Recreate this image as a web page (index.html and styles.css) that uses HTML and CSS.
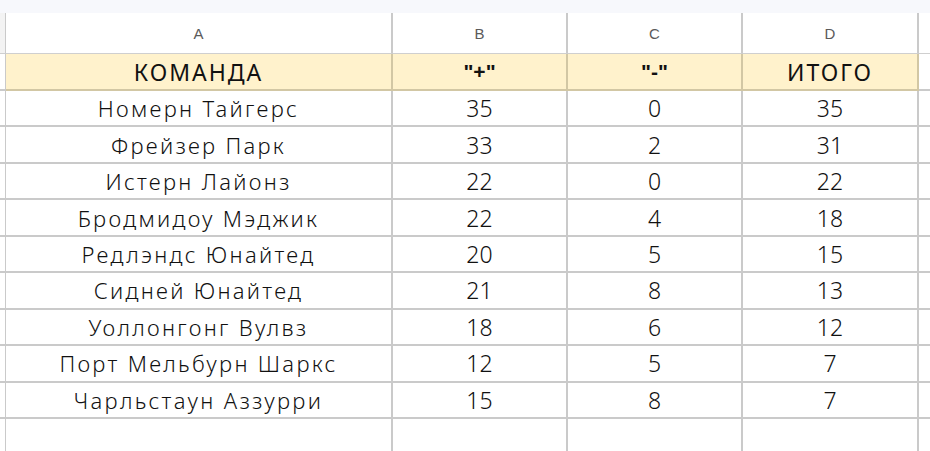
FILE: index.html
```html
<!DOCTYPE html>
<html lang="ru">
<head>
<meta charset="utf-8">
<title>Таблица</title>
<link rel="stylesheet" href="styles.css">
</head>
<body>
<div class="topbar"></div>
<div class="sheet">
  <div class="cell stub letters"></div>
  <div class="cell letter">A</div>
  <div class="cell letter">B</div>
  <div class="cell letter">C</div>
  <div class="cell letter">D</div>
  <div class="cell fill letters-fill"></div>

  <div class="cell stub headstub"></div>
  <div class="cell head name-head">КОМАНДА</div>
  <div class="cell head sign">"+"</div>
  <div class="cell head sign">"-"</div>
  <div class="cell head name-head">ИТОГО</div>
  <div class="cell fill headfill"></div>

  <div class="cell stub"></div><div class="cell name">Номерн Тайгерс</div><div class="cell num">35</div><div class="cell num">0</div><div class="cell num">35</div><div class="cell fill"></div>
  <div class="cell stub"></div><div class="cell name">Фрейзер Парк</div><div class="cell num">33</div><div class="cell num">2</div><div class="cell num">31</div><div class="cell fill"></div>
  <div class="cell stub"></div><div class="cell name">Истерн Лайонз</div><div class="cell num">22</div><div class="cell num">0</div><div class="cell num">22</div><div class="cell fill"></div>
  <div class="cell stub"></div><div class="cell name">Бродмидоу Мэджик</div><div class="cell num">22</div><div class="cell num">4</div><div class="cell num">18</div><div class="cell fill"></div>
  <div class="cell stub"></div><div class="cell name">Редлэндс Юнайтед</div><div class="cell num">20</div><div class="cell num">5</div><div class="cell num">15</div><div class="cell fill"></div>
  <div class="cell stub"></div><div class="cell name">Сидней Юнайтед</div><div class="cell num">21</div><div class="cell num">8</div><div class="cell num">13</div><div class="cell fill"></div>
  <div class="cell stub"></div><div class="cell name">Уоллонгонг Вулвз</div><div class="cell num">18</div><div class="cell num">6</div><div class="cell num">12</div><div class="cell fill"></div>
  <div class="cell stub"></div><div class="cell name">Порт Мельбурн Шаркс</div><div class="cell num">12</div><div class="cell num">5</div><div class="cell num">7</div><div class="cell fill"></div>
  <div class="cell stub"></div><div class="cell name">Чарльстаун Аззурри</div><div class="cell num">15</div><div class="cell num">8</div><div class="cell num">7</div><div class="cell fill"></div>

  <div class="cell stub last"></div><div class="cell last"></div><div class="cell last"></div><div class="cell last"></div><div class="cell last"></div><div class="cell fill last"></div>
</div>
</body>
</html>
```
FILE: styles.css
```css
html, body {
  margin: 0;
  padding: 0;
  background: #ffffff;
  height: 100%;
  overflow: hidden;
}

.topbar {
  height: 13px;
  background: #f7f8fc;
}

.sheet {
  display: grid;
  grid-template-columns: 6px 387px 175px 175px 176px 1fr;
  grid-template-rows: 41px 37px repeat(9, 36.44px) 32px;
}

.cell {
  box-sizing: border-box;
  border-right: 2px solid #cacaca;
  border-bottom: 2px solid #cacaca;
  display: flex;
  align-items: center;
  justify-content: center;
  color: #111111;
  white-space: nowrap;
}

.stub {
  border-right-width: 1.5px;
}

.fill {
  border-right: none;
}

.letters {
  background: #f3f3f3;
  border-bottom: 1px solid #cfcfcf;
}

.letter {
  border-bottom: 1px solid #cfcfcf;
  font-family: "Liberation Sans", Arial, sans-serif;
  font-size: 15px;
  color: #5a5a5a;
  padding-top: 1px;
}

.letters-fill {
  border-bottom: 1px solid #cfcfcf;
}

.head {
  background: #fff2cc;
  border-right-color: #d2c7a4;
  border-bottom-color: #d2c7a4;
}

.name-head {
  font-family: "Noto Sans", "DejaVu Sans", sans-serif;
  font-size: 23px;
  font-weight: 400;
  letter-spacing: 2px;
  color: #111111;
}

.sign {
  font-family: "Liberation Sans", Arial, sans-serif;
  font-size: 21px;
  font-weight: 700;
  color: #111111;
}

.name {
  font-family: "Noto Sans", "DejaVu Sans", sans-serif;
  font-size: 22px;
  font-weight: 350;
  letter-spacing: 2.3px;
  color: #111111;
}

.num {
  font-family: "Noto Sans", "Liberation Sans", sans-serif;
  font-size: 23px;
  font-weight: 350;
  color: #111111;
}

.last {
  border-bottom: none;
}
```
